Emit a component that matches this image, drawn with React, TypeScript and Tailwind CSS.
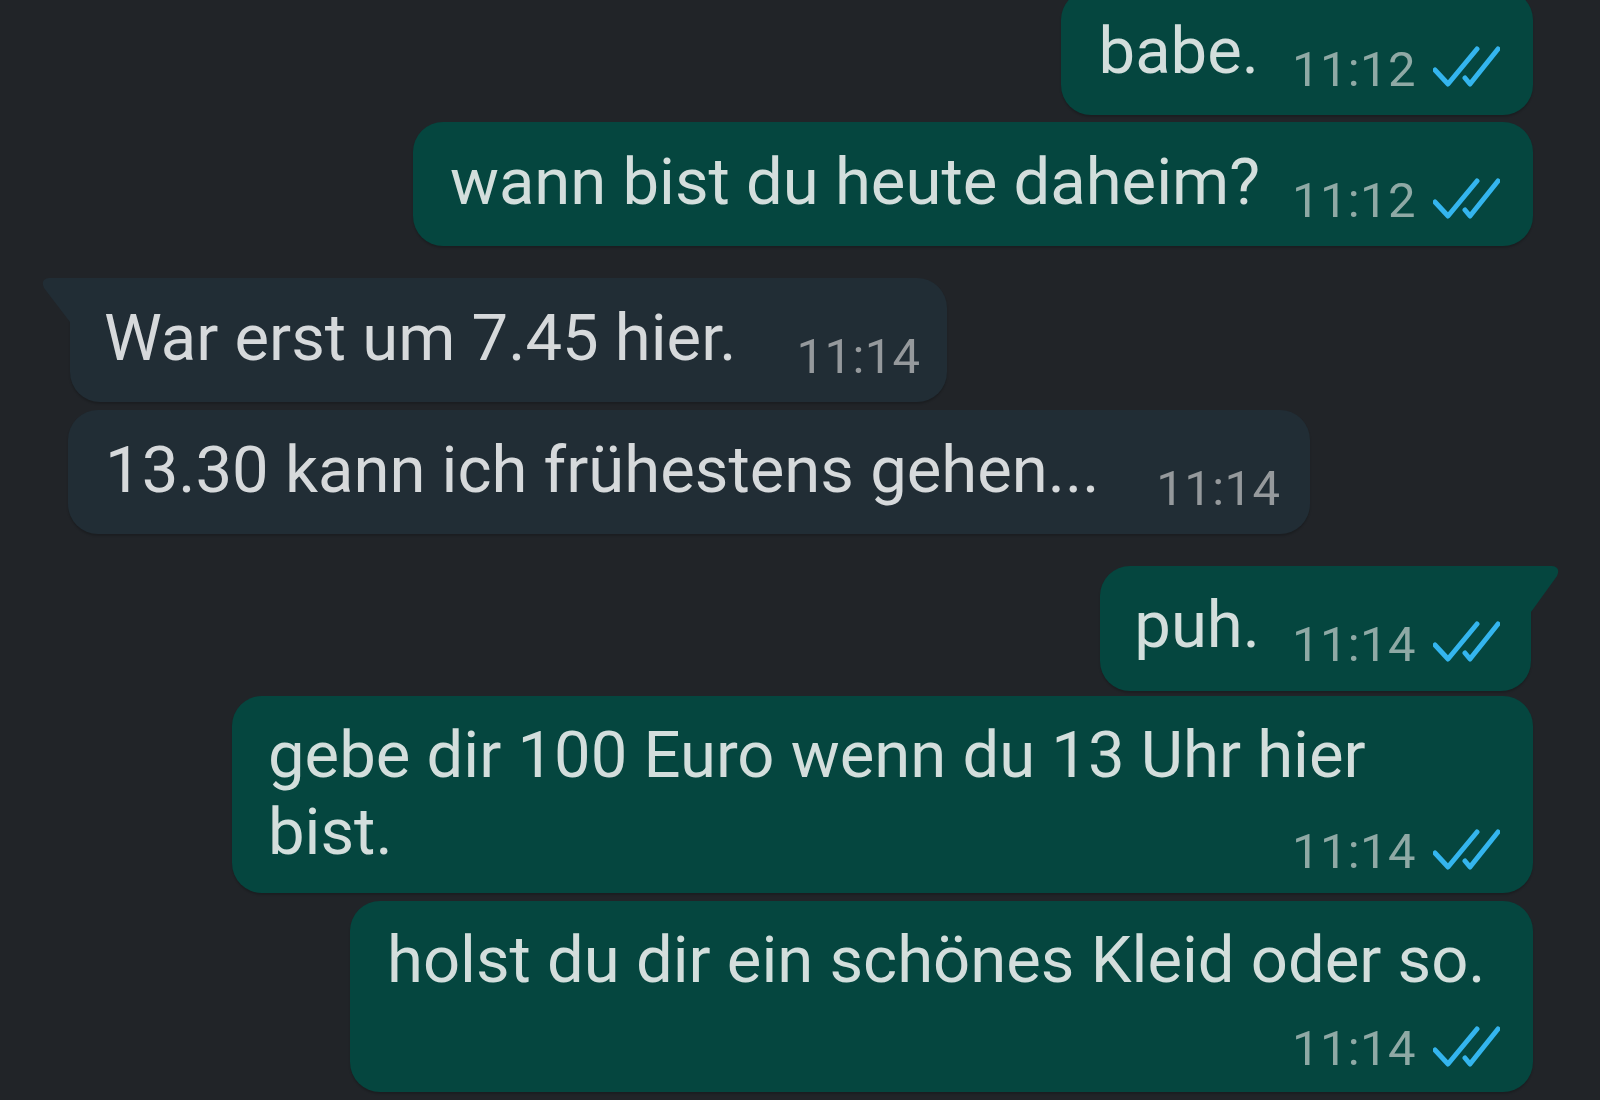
const outgoing = "bg-[#05463f] text-[#d3dedc] shadow-[0_2px_2px_rgba(0,0,0,0.18)]";
const incoming = "bg-[#212d35] text-[#d6d9db] shadow-[0_2px_2px_rgba(0,0,0,0.18)]";

function Ticks() {
  return (
    <svg width="67" height="41" viewBox="0 0 67 41" fill="none" className="shrink-0">
      <path
        d="M2 24 L15 38 L44 3 M32 32 L37 38 L65 3"
        stroke="#34b5ee"
        strokeWidth="5"
        strokeLinecap="round"
        strokeLinejoin="round"
      />
    </svg>
  );
}

function Meta({ time, read }: { time: string; read: boolean }) {
  return (
    <div className="flex items-center gap-[17px] shrink-0">
      <span className={`mt-[6px] text-[49px] leading-[58px] tracking-[0.4px] ${read ? "text-[#8fa9a5]" : "text-[#95999c]"}`}>
        {time}
      </span>
      {read && <Ticks />}
    </div>
  );
}

function TailLeft() {
  return (
    <svg width="32" height="48" viewBox="0 0 32 48" className="absolute left-[-28px] top-0">
      <path d="M7 0 H32 V48 H28 V44 L2 10 Q-2 1 7 0 Z" fill="#212d35" />
    </svg>
  );
}

function TailRight() {
  return (
    <svg width="32" height="48" viewBox="0 0 32 48" className="absolute right-[-28px] top-0">
      <path d="M25 0 H0 V48 H4 V46 L30 10 Q34 1 25 0 Z" fill="#05463f" />
    </svg>
  );
}

export default function App() {
  return (
    <div className="w-[1600px] h-[1100px] overflow-hidden bg-[#212428] font-['Roboto',sans-serif]">
      <div className="flex flex-col items-end pr-[67px] -mt-[10px]">
        {/* babe */}
        <div className={`${outgoing} h-[125px] rounded-[30px] flex items-center pl-[38px] pr-[33px] gap-[33px]`}>
          <span className="text-[65.2px] leading-[76px] -mt-[4px]">babe.</span>
          <div className="mt-[28px]"><Meta time="11:12" read /></div>
        </div>
        <div className={`${outgoing} mt-[7px] h-[124px] rounded-[30px] flex items-center pl-[37px] pr-[33px] gap-[32px]`}>
          <span className="text-[65.2px] leading-[76px] -mt-[4px]">wann bist du heute daheim?</span>
          <div className="mt-[28px]"><Meta time="11:12" read /></div>
        </div>
      </div>

      <div className="flex flex-col items-start mt-[32px]">
        <div className={`${incoming} relative ml-[70px] h-[124px] rounded-[30px] rounded-tl-none flex items-center pl-[34px] pr-[26px] gap-[60px]`}>
          <TailLeft />
          <span className="text-[65.2px] leading-[76px] -mt-[4px]">War erst um 7.45 hier.</span>
          <div className="mt-[28px]"><Meta time="11:14" read={false} /></div>
        </div>
        <div className={`${incoming} ml-[68px] mt-[8px] h-[124px] rounded-[30px] flex items-center pl-[37px] pr-[30px] gap-[57px]`}>
          <span className="text-[65.2px] leading-[76px] -mt-[4px]">13.30 kann ich frühestens gehen...</span>
          <div className="mt-[28px]"><Meta time="11:14" read={false} /></div>
        </div>
      </div>

      <div className="flex flex-col items-end pr-[67px] mt-[32px]">
        <div className={`${outgoing} relative mr-[2px] h-[125px] rounded-[30px] rounded-tr-none flex items-center pl-[34px] pr-[31px] gap-[32px]`}>
          <TailRight />
          <span className="text-[65.2px] leading-[76px] -mt-[8px]">puh.</span>
          <div className="mt-[26px]"><Meta time="11:14" read /></div>
        </div>
        <div className={`${outgoing} mt-[5px] h-[197px] w-[1301px] rounded-[30px] pl-[36px] pr-[33px] pt-[21px]`}>
          <p className="text-[65.2px] leading-[77px]">
            gebe dir 100 Euro wenn du 13 Uhr hier
            <br />
            bist.
          </p>
          <div className="flex justify-end -mt-[54px]"><Meta time="11:14" read /></div>
        </div>
        <div className={`${outgoing} mt-[8px] h-[191px] w-[1183px] rounded-[30px] pl-[37px] pr-[33px] pt-[21px]`}>
          <p className="text-[65.2px] leading-[77px] whitespace-nowrap">holst du dir ein schönes Kleid oder so.</p>
          <div className="flex justify-end mt-[15px]"><Meta time="11:14" read /></div>
        </div>
      </div>
    </div>
  );
}
